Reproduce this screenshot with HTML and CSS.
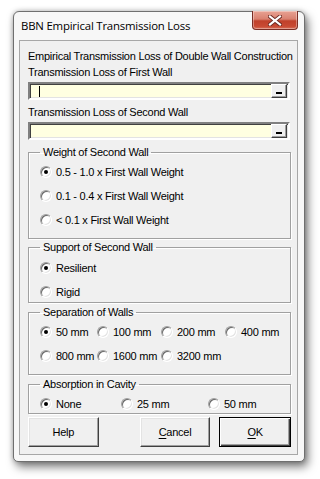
FILE: index.html
```html
<!DOCTYPE html>
<html>
<head>
<meta charset="utf-8">
<link rel="stylesheet" href="styles.css">
</head>
<body>
<div class="window">
  <div class="titlebar">
    <span class="title">BBN Empirical Transmission Loss</span>
    <span class="close">
      <svg width="14" height="11" viewBox="0 0 14 11"><path d="M2 1.5 L12 9.5 M12 1.5 L2 9.5" stroke="#6b2a22" stroke-width="4" stroke-linecap="square"/><path d="M2 1.5 L12 9.5 M12 1.5 L2 9.5" stroke="#fff" stroke-width="2.2" stroke-linecap="square"/></svg>
    </span>
  </div>
  <div class="client">
    <div class="label l1">Empirical Transmission Loss of Double Wall Construction</div>
    <div class="label">Transmission Loss of First Wall</div>
    <div class="textbox"><span class="caret"></span><span class="dots"><i></i></span></div>
    <div class="label l3">Transmission Loss of Second Wall</div>
    <div class="textbox"><span class="dots"><i></i></span></div>

    <fieldset class="frame f1">
      <legend>Weight of Second Wall</legend>
      <div class="row"><span class="radio on"></span>0.5 - 1.0 x First Wall Weight</div>
      <div class="row"><span class="radio"></span>0.1 - 0.4 x First Wall Weight</div>
      <div class="row"><span class="radio"></span>&lt; 0.1 x First Wall Weight</div>
    </fieldset>

    <fieldset class="frame f2">
      <legend>Support of Second Wall</legend>
      <div class="row"><span class="radio on"></span>Resilient</div>
      <div class="row"><span class="radio"></span>Rigid</div>
    </fieldset>

    <fieldset class="frame f3">
      <legend>Separation of Walls</legend>
      <div class="grid sep">
        <div class="row"><span class="radio on"></span>50 mm</div>
        <div class="row"><span class="radio"></span>100 mm</div>
        <div class="row"><span class="radio"></span>200 mm</div>
        <div class="row"><span class="radio"></span>400 mm</div>
        <div class="row"><span class="radio"></span>800 mm</div>
        <div class="row"><span class="radio"></span>1600 mm</div>
        <div class="row"><span class="radio"></span>3200 mm</div>
      </div>
    </fieldset>

    <fieldset class="frame f4">
      <legend>Absorption in Cavity</legend>
      <div class="grid abs">
        <div class="row"><span class="radio on"></span>None</div>
        <div class="row"><span class="radio"></span>25 mm</div>
        <div class="row"><span class="radio"></span>50 mm</div>
      </div>
    </fieldset>

    <div class="buttons">
      <span class="btn">Help</span>
      <span class="btn cancel"><u>C</u>ancel</span>
      <span class="btn ok"><u>O</u>K</span>
    </div>
  </div>
</div>
</body>
</html>
```
FILE: styles.css
```css
html, body {
  margin: 0;
  padding: 0;
  background: #ffffff;
}
body {
  width: 320px;
  height: 479px;
  overflow: hidden;
  font-family: "Liberation Sans", Arial, sans-serif;
  font-size: 11px;
  letter-spacing: -0.25px;
  color: #000;
}
.window {
  margin: 11px 0 0 13px;
  width: 292px;
  height: 451px;
  box-sizing: border-box;
  background: #f7f7f7;
  border: 1px solid #6f6f6f;
  border-radius: 6px 6px 5px 5px;
  box-shadow: 3px 5px 10px rgba(0,0,0,0.5), 0 0 5px rgba(0,0,0,0.25);
  padding: 0 6px 6px 5px;
  display: flex;
  flex-direction: column;
}
.titlebar {
  height: 28px;
  display: flex;
  align-items: flex-start;
  justify-content: space-between;
  flex-shrink: 0;
}
.title {
  font-family: "Open Sans", "Noto Sans", sans-serif;
  font-size: 11.4px;
  margin: 6px 0 0 2px;
  color: #000;
  letter-spacing: -0.2px;
}
.close {
  width: 46px;
  height: 19px;
  box-sizing: border-box;
  margin-top: -1px;
  border: 1px solid #7a2e25;
  border-top: none;
  border-radius: 0 0 4px 4px;
  background: linear-gradient(#e8a293 0%, #d98170 45%, #c0412b 55%, #c84a33 85%, #d8705a 100%);
  box-shadow: inset 0 0 0 1px rgba(255,255,255,0.35);
  display: flex;
  align-items: center;
  justify-content: center;
}
.client {
  flex: 1;
  background: #f0f0f0;
  border: 1px solid #a7a7a7;
  padding: 7px 6px 0 8px;
  display: flex;
  flex-direction: column;
}
.label {
  line-height: 16px;
  height: 16px;
  white-space: nowrap;
}
.l3 {
  margin-top: 4px;
}
.textbox {
  width: 262px;
  height: 18px;
  box-sizing: border-box;
  margin-top: 2px;
  background: #ffffe1;
  border-style: solid;
  border-width: 2px;
  border-color: #808080 #ffffff #ffffff #808080;
  box-shadow: inset 1px 1px 0 #404040, inset -1px -1px 0 #e3e3e3;
  display: flex;
  align-items: center;
  justify-content: space-between;
  padding: 0 1px 0 9px;
}
.caret {
  width: 1px;
  height: 11px;
  background: #000;
}
.dots {
  margin-left: auto;
  width: 16px;
  height: 14px;
  box-sizing: border-box;
  background: #f0f0f0;
  border-style: solid;
  border-width: 1px;
  border-color: #ffffff #404040 #404040 #ffffff;
  box-shadow: inset -1px -1px 0 #a0a0a0;
  display: flex;
  justify-content: center;
  align-items: flex-end;
  padding-bottom: 3px;
}
.dots i {
  display: block;
  width: 6px;
  height: 2px;
  background: #000;
}
.frame {
  margin: 5px 0 0 0;
  padding: 1px 0 0 11px;
  width: 263px;
  box-sizing: border-box;
  border: 1px solid #a0a0a0;
  box-shadow: 1px 1px 0 #ffffff, inset 1px 1px 0 #ffffff;
  min-width: 0;
}
.frame legend {
  padding: 0 3px;
  margin-left: 0px;
  line-height: 14px;
  height: 14px;
}
.f1 { height: 94px; margin-top: 5px; }
.f2 { height: 63px; margin-top: 1px; padding-top: 2px; }
.f3 { height: 70px; margin-top: 2px; }
.f4 { height: 37px; margin-top: 2px; padding-top: 1px; }
.row {
  height: 24px;
  display: flex;
  align-items: center;
  white-space: nowrap;
}
.grid {
  display: grid;
}
.sep {
  grid-template-columns: 57px 64px 64px auto;
}
.abs {
  grid-template-columns: 81px 87px auto;
}
.radio {
  width: 12px;
  height: 12px;
  box-sizing: border-box;
  border-radius: 50%;
  border: 1px solid;
  border-color: #a0a0a0 #ffffff #ffffff #a0a0a0;
  box-shadow: inset 1px 1px 0 #696969, inset -1px -1px 0 #e3e3e3;
  background: #ffffff;
  margin-right: 4px;
  display: flex;
  align-items: center;
  justify-content: center;
  flex-shrink: 0;
}
.radio.on::after {
  content: "";
  width: 4px;
  height: 4px;
  border-radius: 50%;
  background: #000;
}
.buttons {
  display: flex;
  margin-top: 3px;
  width: 263px;
}
.btn {
  width: 71px;
  height: 30px;
  box-sizing: border-box;
  background: #f0f0f0;
  border-style: solid;
  border-width: 1px;
  border-color: #ffffff #404040 #404040 #ffffff;
  box-shadow: inset -1px -1px 0 #a0a0a0, inset 1px 1px 0 #e3e3e3;
  display: flex;
  align-items: center;
  justify-content: center;
}
.cancel {
  margin-left: 41px;
}
.ok {
  margin-left: 9px;
  width: 72px;
  border: 1px solid #000;
  box-shadow: inset 1px 1px 0 #ffffff, inset -1px -1px 0 #404040, inset -2px -2px 0 #a0a0a0;
}
u {
  text-decoration: underline;
  text-underline-offset: 2px;
}
```
